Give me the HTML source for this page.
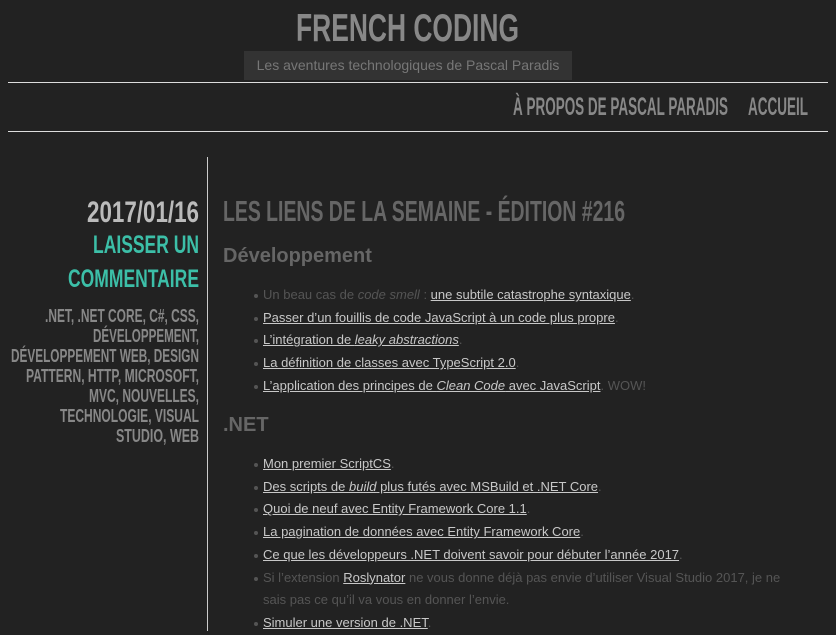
<!DOCTYPE html>
<html><head><meta charset="utf-8"><style>
html,body{margin:0;padding:0;background:#222;width:836px;height:631px;overflow:hidden;font-family:"Liberation Sans",Arial,sans-serif}
.abs{position:absolute}
.sub{left:244px;top:51px;width:328px;height:29px;background:#333;color:#777;font-size:14px;line-height:29px;text-align:center}
.hr{left:8px;width:820px;height:1px;background:#ddd}
.vl{left:207px;top:157px;width:1px;height:474px;background:#ccc}
h3{position:absolute;margin:0;color:#666;font-weight:bold;font-size:20px;left:223px}
ul{position:absolute;left:263px;margin:0;padding:0;list-style:none;font-size:13px;color:#555;width:540px}
li{position:relative;line-height:22.7px}
li:before{content:"";position:absolute;left:-9px;top:10px;width:4px;height:4px;border-radius:2px;background:#555}
a{color:#c8c8c8;text-decoration:underline}
svg text{font-family:"Liberation Sans",Arial,sans-serif;font-weight:bold}
</style></head><body>
<svg class="abs" style="left:0;top:0" width="836" height="631">
<text x="296" y="41" textLength="223" lengthAdjust="spacingAndGlyphs" font-size="39" fill="#888">FRENCH CODING</text>
<text x="513" y="115" textLength="215" lengthAdjust="spacingAndGlyphs" font-size="25" fill="#888">À PROPOS DE PASCAL PARADIS</text>
<text x="748" y="115" textLength="60" lengthAdjust="spacingAndGlyphs" font-size="25" fill="#888">ACCUEIL</text>
<text x="87" y="222" textLength="112" lengthAdjust="spacingAndGlyphs" font-size="30" fill="#bbb">2017/01/16</text>
<text x="93" y="253" textLength="106" lengthAdjust="spacingAndGlyphs" font-size="25" fill="#3cbfa8">LAISSER UN</text>
<text x="68" y="287" textLength="131" lengthAdjust="spacingAndGlyphs" font-size="25" fill="#3cbfa8">COMMENTAIRE</text>
<g font-size="18" fill="#888">
<text x="45" y="322" textLength="154" lengthAdjust="spacingAndGlyphs">.NET, .NET CORE, C#, CSS,</text>
<text x="93" y="342" textLength="106" lengthAdjust="spacingAndGlyphs">DÉVELOPPEMENT,</text>
<text x="11" y="362" textLength="188" lengthAdjust="spacingAndGlyphs">DÉVELOPPEMENT WEB, DESIGN</text>
<text x="26" y="382" textLength="173" lengthAdjust="spacingAndGlyphs">PATTERN, HTTP, MICROSOFT,</text>
<text x="89" y="402" textLength="110" lengthAdjust="spacingAndGlyphs">MVC, NOUVELLES,</text>
<text x="60" y="422" textLength="139" lengthAdjust="spacingAndGlyphs">TECHNOLOGIE, VISUAL</text>
<text x="116" y="442" textLength="83" lengthAdjust="spacingAndGlyphs">STUDIO, WEB</text>
</g>
<text x="223" y="221" textLength="402" lengthAdjust="spacingAndGlyphs" font-size="29" fill="#666">LES LIENS DE LA SEMAINE - ÉDITION #216</text>
</svg>
<div class="abs sub">Les aventures technologiques de Pascal Paradis</div>
<div class="abs hr" style="top:82px"></div>
<div class="abs hr" style="top:131px"></div>
<div class="abs vl"></div>
<h3 style="top:245px">Développement</h3>
<ul style="top:284px">
<li>Un beau cas de <i>code smell</i> : <a>une subtile catastrophe syntaxique</a>.</li>
<li><a>Passer d’un fouillis de code JavaScript à un code plus propre</a>.</li>
<li><a>L’intégration de <i>leaky abstractions</i></a>.</li>
<li><a>La définition de classes avec TypeScript 2.0</a>.</li>
<li><a>L’application des principes de <i>Clean Code</i> avec JavaScript</a>. WOW!</li>
</ul>
<h3 style="top:414px">.NET</h3>
<ul style="top:453px">
<li><a>Mon premier ScriptCS</a>.</li>
<li><a>Des scripts de <i>build</i> plus futés avec MSBuild et .NET Core</a>.</li>
<li><a>Quoi de neuf avec Entity Framework Core 1.1</a>.</li>
<li><a>La pagination de données avec Entity Framework Core</a>.</li>
<li><a>Ce que les développeurs .NET doivent savoir pour débuter l’année 2017</a>.</li>
<li>Si l’extension <a>Roslynator</a> ne vous donne déjà pas envie d’utiliser Visual Studio 2017, je ne sais pas ce qu’il va vous en donner l’envie.</li>
<li><a>Simuler une version de .NET</a>.</li>
</ul>
</body></html>
